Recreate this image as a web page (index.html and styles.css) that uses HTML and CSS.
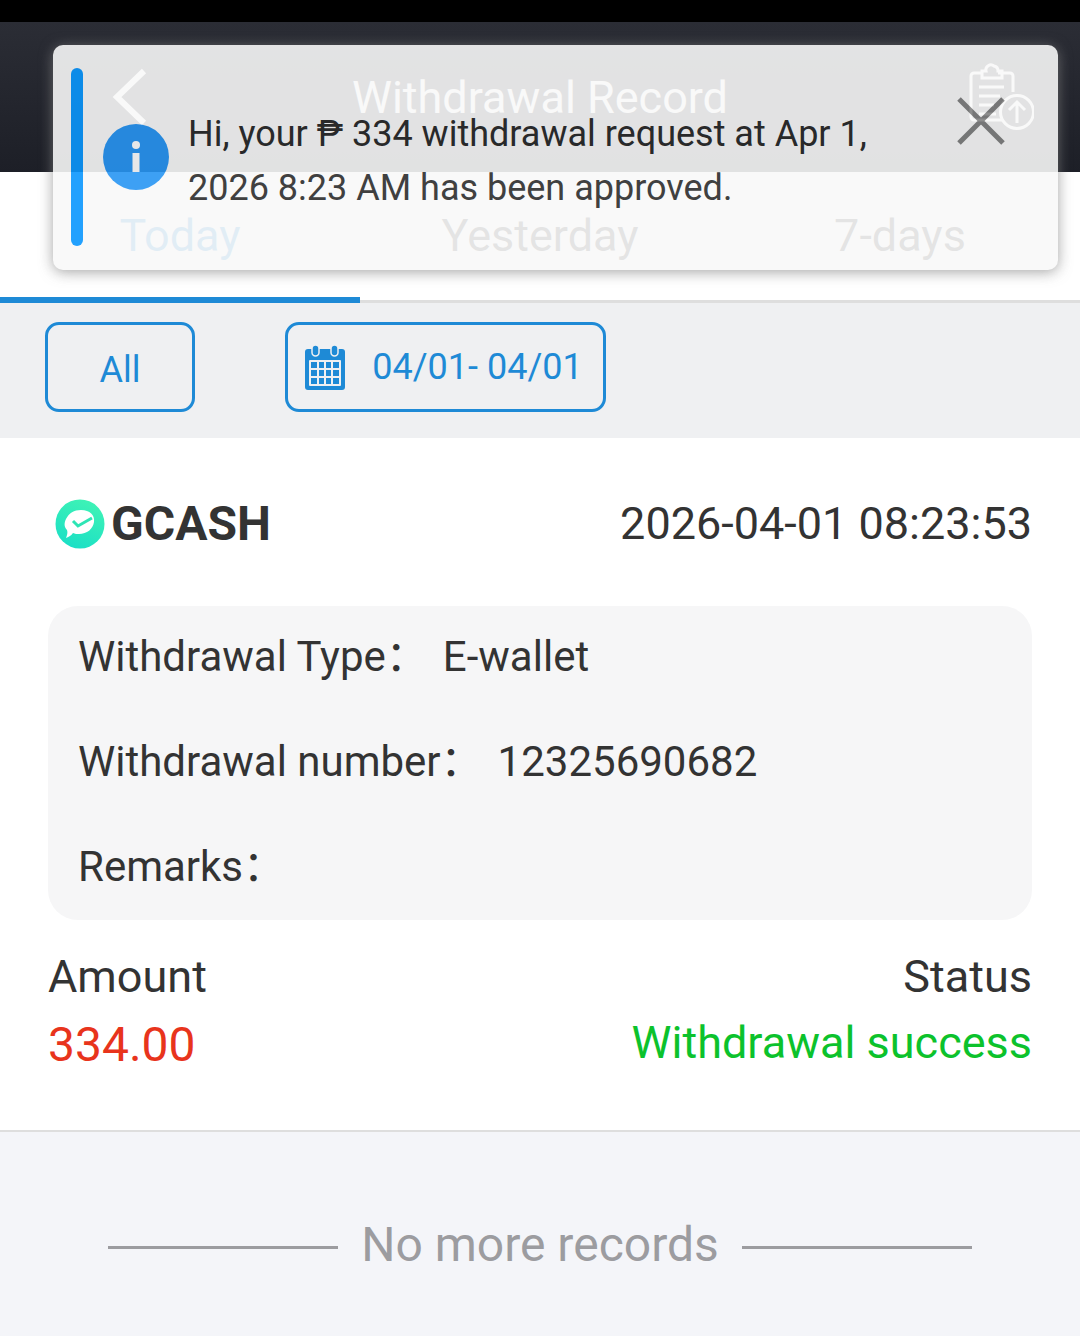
FILE: index.html
```html
<!DOCTYPE html>
<html>

<head>
    <meta name="viewport" content="width=device-width, initial-scale=1.0">
    <title>Withdrawal Record</title>
    <link rel="stylesheet" href="styles.css">
</head>

<body>
    <div class="status-bar"></div>

    <header class="nav-bar">
        <svg class="nav-back" width="40" height="60" viewBox="0 0 40 60">
            <path d="M34 4 L7 30 L34 56" fill="none" stroke="#fff" stroke-width="6" />
        </svg>
        <div class="nav-title">Withdrawal Record</div>
        <svg class="nav-upload" width="68" height="68" viewBox="0 0 68 68" fill="none" stroke="#fff" stroke-width="3">
            <path d="M36 57 H8 a3 3 0 0 1 -3 -3 V13 a3 3 0 0 1 3 -3 H16 M32 10 H44 a3 3 0 0 1 3 3 V29" />
            <path d="M16 15 V8 H20 a5 5 0 0 1 8 -5 a5 5 0 0 1 4 5 H36 V15 Z" />
            <path d="M13 24 H38 M13 33 H34 M13 42 H28 M13 51 H30" />
            <circle cx="51" cy="49" r="16.500" />
            <path d="M51 60 V39 M43 47 L51 39 L59 47" />
        </svg>
    </header>

    <nav class="tabs">
        <div class="tab tab-active">Today</div>
        <div class="tab">Yesterday</div>
        <div class="tab">7-days</div>
    </nav>

    <div class="filter-bar">
        <button class="filter-btn filter-all">All</button>
        <button class="filter-btn filter-date">
            <svg width="42" height="46" viewBox="0 0 42 46">
                <path d="M4 5 H38 a3 3 0 0 1 3 3 V43 a3 3 0 0 1 -3 3 H4 a3 3 0 0 1 -3 -3 V8 a3 3 0 0 1 3 -3 Z" fill="#1e8ad6" />
                <rect x="5" y="16" width="32" height="26" rx="1" fill="#eff0f2" />
                <g fill="#1e8ad6">
                    <rect x="7" y="18" width="6" height="6" /><rect x="15" y="18" width="5" height="6" /><rect x="22" y="18" width="5" height="6" /><rect x="29" y="18" width="6" height="6" />
                    <rect x="7" y="26" width="6" height="6" /><rect x="15" y="26" width="5" height="6" /><rect x="22" y="26" width="5" height="6" /><rect x="29" y="26" width="6" height="6" />
                    <rect x="7" y="34" width="6" height="6" /><rect x="15" y="34" width="5" height="6" /><rect x="22" y="34" width="5" height="6" /><rect x="29" y="34" width="6" height="6" />
                </g>
                <rect x="8" y="1" width="7" height="11" rx="3.500" fill="#1e8ad6" stroke="#eff0f2" stroke-width="1.500" />
                <rect x="27" y="1" width="7" height="11" rx="3.500" fill="#1e8ad6" stroke="#eff0f2" stroke-width="1.500" />
            </svg>
            <span>04/01- 04/01</span>
        </button>
    </div>

    <section class="record">
        <div class="record-head">
            <div class="record-bank">
                <svg class="bank-logo" width="50" height="50" viewBox="0 0 50 50">
                    <defs>
                        <linearGradient id="gcashFill" x1="0.700" y1="0" x2="0.300" y2="1">
                            <stop offset="0" stop-color="#3ff3b5" />
                            <stop offset="1" stop-color="#1adfc6" />
                        </linearGradient>
                    </defs>
                    <circle cx="25" cy="25" r="24.500" fill="url(#gcashFill)" />
                    <path d="M26 11 C35 11 40 16 39 23 C38 30 32 35 24 35 C22 35 20 35 18 34 C16 37 13 38 11 39 C12 36 13 34 12 31 C9 28 9 24 11 20 C14 14 19 11 26 11 Z" fill="#fff" />
                    <path d="M18 22 L23 27 L37 19" fill="none" stroke="#2ee5b5" stroke-width="3" />
                </svg>
                <span>GCASH</span>
            </div>
            <div class="record-time">2026-04-01 08:23:53</div>
        </div>

        <div class="record-info">
            <div class="info-row"><span class="info-label">Withdrawal Type：</span><span>E-wallet</span></div>
            <div class="info-row"><span class="info-label">Withdrawal number：</span><span>12325690682</span></div>
            <div class="info-row"><span class="info-label">Remarks：</span></div>
        </div>

        <div class="record-foot">
            <div class="foot-col">
                <div class="foot-label">Amount</div>
                <div class="foot-amount">334.00</div>
            </div>
            <div class="foot-col foot-right">
                <div class="foot-label">Status</div>
                <div class="foot-status">Withdrawal success</div>
            </div>
        </div>
    </section>

    <footer class="no-more">
        <span class="no-more-line"></span>
        <span class="no-more-text">No more records</span>
        <span class="no-more-line"></span>
    </footer>

    <div class="toast">
        <span class="toast-bar"></span>
        <svg class="toast-icon" width="66" height="66" viewBox="0 0 66 66">
            <circle cx="33" cy="33" r="33" fill="#2795f3" />
            <circle cx="33" cy="21" r="4" fill="#fff" />
            <rect x="29.500" y="29" width="7" height="19" fill="#fff" />
        </svg>
        <div class="toast-text">Hi, your ₱ 334 withdrawal request at Apr 1, 2026 8:23 AM has been approved.</div>
        <svg class="toast-close" width="48" height="48" viewBox="0 0 48 48">
            <path d="M2 2 L46 46 M46 2 L2 46" stroke="#808080" stroke-width="5" fill="none" />
        </svg>
    </div>
</body>

</html>
```

FILE: styles.css
```css
:root {
    --blue: #1e8ad6;
    --text: #333;
    --line: #dedede;
}

* {
    box-sizing: border-box;
}

body {
    position: relative;
    display: flex;
    flex-direction: column;
    width: 1080px;
    height: 1336px;
    margin: 0;
    overflow: hidden;
    font-family: Roboto, "Noto Sans CJK SC", sans-serif;
    color: var(--text);
    background-color: #f4f5f9;
}

.status-bar {
    height: 22px;
    background-color: #000;
}

.nav-bar {
    display: grid;
    grid-template-columns: 1fr auto 1fr;
    align-items: center;
    height: 150px;
    padding: 0 46px;
    background: linear-gradient(#2b2d35, #1d1f27);
}

.nav-back {
    margin-left: 64px;
}

.nav-title {
    font-size: 45px;
    color: #fff;
}

.nav-upload {
    justify-self: end;
}

.tabs {
    display: flex;
    height: 131px;
    background-color: #fff;
    border-bottom: 3px solid var(--line);
}

.tab {
    flex: 1;
    padding-top: 37px;
    font-size: 45px;
    line-height: 54px;
    text-align: center;
}

.tab-active {
    color: var(--blue);
    border-bottom: 6px solid var(--blue);
    margin-bottom: -3px;
}

.filter-bar {
    display: flex;
    align-items: center;
    gap: 90px;
    height: 135px;
    padding: 0 45px 7px;
    background-color: #eff0f2;
}

.filter-btn {
    display: flex;
    align-items: center;
    justify-content: center;
    height: 90px;
    border: 3px solid var(--blue);
    border-radius: 14px;
    background: none;
    font-family: inherit;
    font-size: 36px;
    color: var(--blue);
}

.filter-all {
    width: 150px;
    padding-top: 6px;
}

.filter-date {
    gap: 26px;
    width: 321px;
    padding-right: 10px;
}

.record {
    height: 694px;
    padding: 0 48px;
    background-color: #fff;
    border-bottom: 2px solid var(--line);
}

.record-head {
    display: flex;
    align-items: center;
    justify-content: space-between;
    height: 168px;
    padding-top: 2px;
}

.record-bank {
    display: flex;
    align-items: center;
    gap: 6px;
    padding-left: 7px;
    font-size: 48px;
    font-weight: 700;
}

.bank-logo {
    margin-top: 1px;
}

.record-time {
    font-size: 45px;
}

.record-info {
    height: 314px;
    padding: 0 30px;
    border-radius: 30px;
    background-color: #f6f6f7;
}

.info-row {
    display: flex;
    align-items: baseline;
    height: 105px;
    font-size: 42px;
    line-height: 102px;
}

.info-label {
    margin-right: 15px;
}

.record-foot {
    display: flex;
    justify-content: space-between;
    padding-top: 31px;
}

.foot-col {
    display: flex;
    flex-direction: column;
    gap: 14px;
}

.foot-right {
    align-items: flex-end;
}

.foot-label {
    font-size: 45px;
    line-height: 52px;
}

.foot-amount {
    font-size: 48px;
    line-height: 56px;
    color: #e8341c;
}

.foot-status {
    font-size: 45px;
    line-height: 52px;
    color: #0cc22c;
}

.no-more {
    display: flex;
    align-items: center;
    justify-content: center;
    gap: 23px;
    padding-top: 86px;
}

.no-more-line {
    width: 230px;
    height: 3px;
    background-color: #9c9ca0;
}

.no-more-text {
    margin-bottom: 4px;
    font-size: 48px;
    line-height: 54px;
    color: #9c9ca0;
}

.toast {
    position: absolute;
    top: 45px;
    left: 53px;
    display: flex;
    align-items: flex-start;
    width: 1005px;
    height: 225px;
    padding: 23px 53px 0 18px;
    border-radius: 10px;
    background-color: #f9f9f9;
    opacity: 0.893;
    box-shadow: 0 2px 14px rgba(130, 130, 130, 0.8);
}

.toast-bar {
    flex: none;
    width: 12px;
    height: 178px;
    border-radius: 6px;
    background-color: #0a97fe;
}

.toast-icon {
    flex: none;
    margin: 56px 21px 0 20px;
}

.toast-text {
    flex: none;
    width: 690px;
    margin-top: 39px;
    margin-left: -2px;
    font-size: 36px;
    line-height: 54px;
    color: #2a2a2a;
}

.toast-close {
    margin: 29px 0 0 auto;
}
```
